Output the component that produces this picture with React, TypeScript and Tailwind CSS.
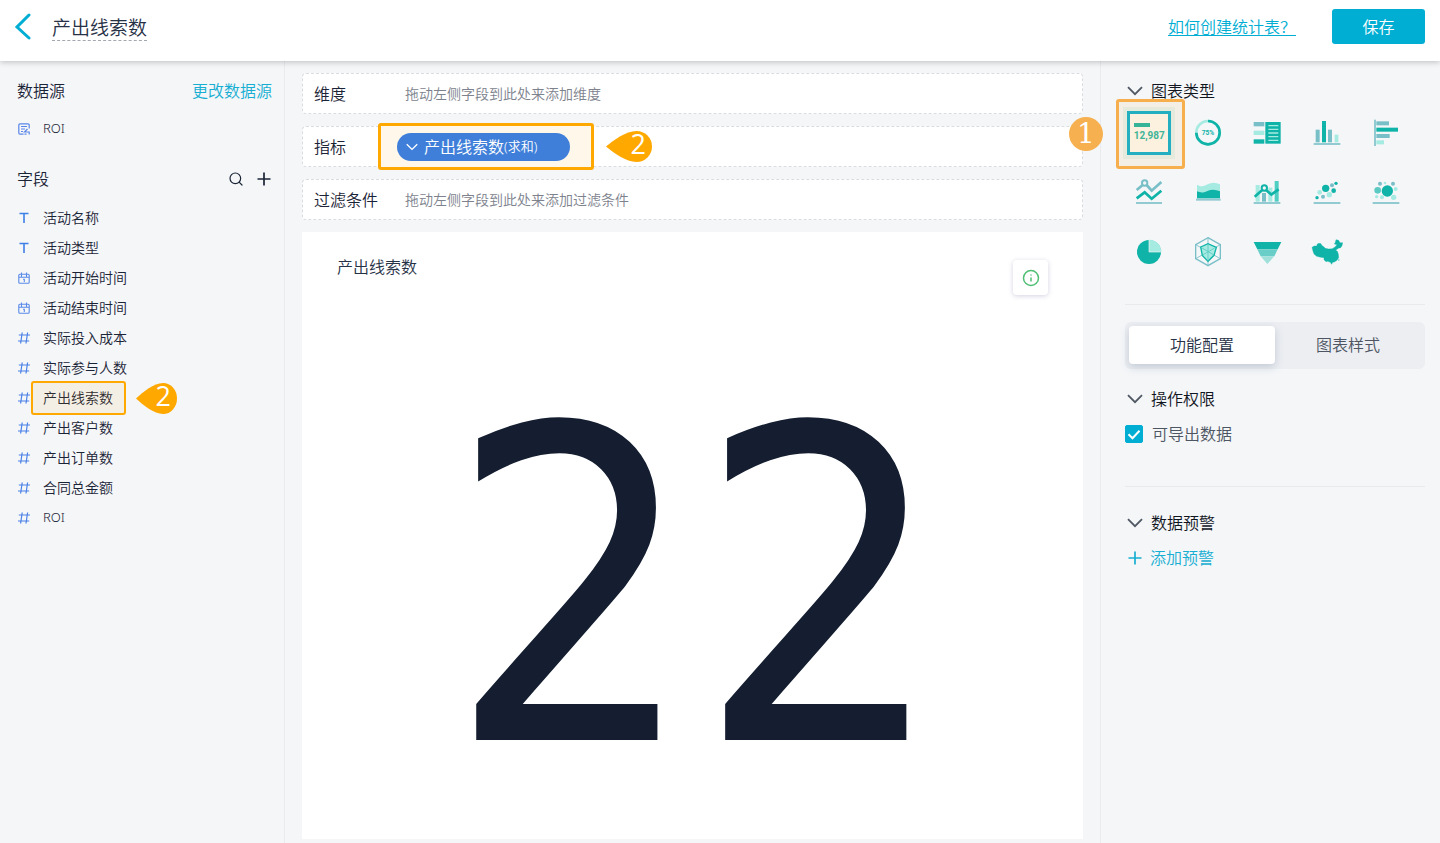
import React, { useState } from "react";
import { Info, Search } from "lucide-react";

const DARK = "#0fb3a7";
const MID = "#79bfc8";
const SOFT = "#5cc9c3";
const LIGHT = "#a5ebe2";
const BASE = "#92cad2";

type FieldKind = "text" | "date" | "number";
type Field = { name: string; kind: FieldKind; marked?: boolean };

const fields: Field[] = [
  { name: "活动名称", kind: "text" },
  { name: "活动类型", kind: "text" },
  { name: "活动开始时间", kind: "date" },
  { name: "活动结束时间", kind: "date" },
  { name: "实际投入成本", kind: "number" },
  { name: "实际参与人数", kind: "number" },
  { name: "产出线索数", kind: "number", marked: true },
  { name: "产出客户数", kind: "number" },
  { name: "产出订单数", kind: "number" },
  { name: "合同总金额", kind: "number" },
  { name: "ROI", kind: "number" },
];

function FieldIcon({ kind }: { kind: FieldKind }) {
  if (kind === "text") {
    return (
      <svg className="size-3 text-[#3f7fe8]" viewBox="0 0 12 12" fill="none" stroke="currentColor" strokeWidth="1.6">
        <path d="M1.500 1.500h9M6 1.500V11" />
      </svg>
    );
  }
  if (kind === "date") {
    return (
      <svg className="size-3 text-[#5b8be8]" viewBox="0 0 12 12" fill="none" stroke="currentColor" strokeWidth="1.1">
        <rect x="0.8" y="2.300" width="10.400" height="9" rx="1" />
        <path d="M3.500 0.500v4.500M8.500 0.500v4.500M0.800 5.200h10.400M5 7.300h1.300v2.700" />
      </svg>
    );
  }
  return (
    <svg className="size-3 text-[#4a80e6]" viewBox="0 0 12 12" fill="none" stroke="currentColor" strokeWidth="1.2">
      <path d="M4.200 0.500L2.600 11.500M9.600 0.500L8 11.500M0.800 3h11.200M0 9h11.200" />
    </svg>
  );
}

function Chevron({ className }: { className: string }) {
  return (
    <svg className={className} viewBox="0 0 16 10" fill="none" stroke="currentColor" strokeWidth="1.8">
      <path d="M1 1.200l7 7 7-7" />
    </svg>
  );
}

function PlusMark({ className }: { className: string }) {
  return (
    <svg className={className} viewBox="0 0 14 14" fill="none" stroke="currentColor" strokeWidth="1.7">
      <path d="M7 0.500v13M0.500 7h13" />
    </svg>
  );
}

function Callout({ className }: { className: string }) {
  return (
    <span className={`pointer-events-none absolute flex h-[31px] items-center justify-end text-white ${className}`}>
      <svg className="absolute inset-0 size-full" viewBox="0 0 46 31" preserveAspectRatio="none">
        <path d="M0 15.500C8 9 20 0 30.500 0a15.500 15.500 0 0 1 0 31C20 31 8 22 0 15.500z" fill="#ffa800" />
      </svg>
      <span className="relative pr-[6px] pb-[7px] font-['Open_Sans','Noto_Sans',sans-serif] text-[27px] leading-none font-normal">2</span>
    </span>
  );
}

function Glyph({ cx, cy, children }: { cx: number; cy: number; children: React.ReactNode }) {
  return (
    <svg className="size-8" viewBox={`${cx - 48} ${cy - 48} 96 96`} aria-hidden="true">
      {children}
    </svg>
  );
}

const chartTypes: { label: string; icon: React.ReactNode }[] = [
  {
    label: "环形进度",
    icon: (
      <Glyph cx={444} cy={189}>
        <circle cx="444" cy="188" r="35" fill="none" stroke={LIGHT} strokeWidth="8" />
        <path d="M444 153a35 35 0 1 1-35 35" fill="none" stroke={DARK} strokeWidth="8" />
        <text x="444" y="196" textAnchor="middle" fontSize="20" fontWeight="700" fill={DARK} fontFamily="Roboto, sans-serif">
          75%
        </text>
      </Glyph>
    ),
  },
  {
    label: "表格",
    icon: (
      <Glyph cx={83} cy={189}>
        <rect x="43" y="156" width="32" height="13" fill={MID} />
        <rect x="43" y="182" width="32" height="13" fill={LIGHT} />
        <rect x="43" y="208" width="32" height="13" fill={DARK} />
        <rect x="78" y="156" width="46" height="65" fill={DARK} />
        <path d="M87 167h30M87 178h30M87 189h30M87 200h30M87 211h30" stroke={LIGHT} strokeWidth="4" />
      </Glyph>
    ),
  },
  {
    label: "柱状图",
    icon: (
      <Glyph cx={261} cy={189}>
        <rect x="227" y="179" width="12" height="38" fill={MID} />
        <rect x="246" y="153" width="12" height="64" fill={DARK} />
        <rect x="264" y="179" width="12" height="38" fill={MID} />
        <rect x="284" y="194" width="11" height="23" fill={LIGHT} />
        <rect x="221" y="219" width="80" height="6" fill={BASE} />
      </Glyph>
    ),
  },
  {
    label: "条形图",
    icon: (
      <Glyph cx={438} cy={189}>
        <rect x="402" y="149" width="6" height="79" fill={BASE} />
        <rect x="409" y="154" width="38" height="12" fill={MID} />
        <rect x="409" y="173" width="65" height="12" fill={DARK} />
        <rect x="409" y="192" width="40" height="12" fill={MID} />
        <rect x="409" y="211" width="23" height="12" fill={LIGHT} />
      </Glyph>
    ),
  },
  {
    label: "折线图",
    icon: (
      <Glyph cx={117} cy={81}>
        <path d="M80 75l18-15M110 60l15 17 29-26" fill="none" stroke={MID} strokeWidth="8" />
        <circle cx="104" cy="54" r="8" fill="none" stroke={MID} strokeWidth="6" />
        <path d="M80 100l24-18 21 19 29-24" fill="none" stroke={DARK} strokeWidth="8" />
        <rect x="78" y="111" width="78" height="6" fill={BASE} />
      </Glyph>
    ),
  },
  {
    label: "面积图",
    icon: (
      <Glyph cx={294} cy={81}>
        <path d="M261 59c14 8 22 4 32-1 12-6 24-6 37 0v43h-69z" fill={LIGHT} />
        <path d="M261 79c14 6 22 3 33-2 12-4 24-3 36 2v21h-69z" fill={DARK} />
        <rect x="258" y="101" width="74" height="6" fill={BASE} />
      </Glyph>
    ),
  },
  {
    label: "双轴图",
    icon: (
      <Glyph cx={83} cy={81}>
        <rect x="49" y="60" width="12" height="50" fill={LIGHT} />
        <rect x="68" y="84" width="12" height="26" fill={MID} />
        <rect x="87" y="68" width="12" height="42" fill={LIGHT} />
        <rect x="106" y="48" width="12" height="62" fill="#4fcfc2" />
        <path d="M46 95l22-19M81 76l15 13 22-16" fill="none" stroke={DARK} strokeWidth="8" />
        <circle cx="75" cy="69" r="8" fill="none" stroke={DARK} strokeWidth="6" />
        <rect x="43" y="111" width="80" height="6" fill={BASE} />
      </Glyph>
    ),
  },
  {
    label: "散点图",
    icon: (
      <Glyph cx={261} cy={81}>
        <circle cx="257" cy="70" r="11" fill={DARK} />
        <circle cx="281" cy="77" r="7" fill={DARK} />
        <circle cx="288" cy="55" r="5" fill={DARK} />
        <circle cx="276" cy="61" r="6" fill={MID} />
        <circle cx="239" cy="82" r="7" fill={LIGHT} />
        <circle cx="268" cy="89" r="8" fill={LIGHT} />
        <circle cx="249" cy="95" r="6" fill={MID} />
        <circle cx="231" cy="98" r="5" fill={DARK} />
        <rect x="221" y="111" width="80" height="6" fill={BASE} />
      </Glyph>
    ),
  },
  {
    label: "气泡图",
    icon: (
      <Glyph cx={438} cy={81}>
        <circle cx="442" cy="78" r="17" fill={DARK} />
        <circle cx="413" cy="76" r="10" fill={SOFT} />
        <circle cx="461" cy="97" r="8" fill={LIGHT} />
        <circle cx="467" cy="72" r="6" fill={LIGHT} />
        <circle cx="420" cy="56" r="6" fill={MID} />
        <circle cx="459" cy="56" r="6" fill={MID} />
        <circle cx="435" cy="54" r="4" fill={LIGHT} />
        <circle cx="426" cy="97" r="6" fill={LIGHT} />
        <circle cx="410" cy="95" r="5" fill={LIGHT} />
        <rect x="398" y="111" width="80" height="6" fill={BASE} />
      </Glyph>
    ),
  },
  {
    label: "饼图",
    icon: (
      <Glyph cx={117} cy={258}>
        <circle cx="117" cy="261" r="36" fill={DARK} />
        <path d="M117 261v-37a37 37 0 0 1 37 37z" fill={LIGHT} />
        <path d="M117 224v37h37" fill="none" stroke="#f4f6f8" strokeWidth="2" />
      </Glyph>
    ),
  },
  {
    label: "雷达图",
    icon: (
      <Glyph cx={294} cy={258}>
        <path d="M294 218l37 21v42l-37 21-37-21v-42z" fill="none" stroke={MID} strokeWidth="4" />
        <path d="M294 218v84M257 239l74 42M331 239l-74 42" stroke={MID} strokeWidth="2.500" />
        <path d="M272 246l22-10 25 11-7 24-18 18-17-18z" fill={LIGHT} stroke={DARK} strokeWidth="4" />
        <path d="M294 238v50M276 249l36 21M314 249l-36 21" stroke={SOFT} strokeWidth="2.500" />
      </Glyph>
    ),
  },
  {
    label: "漏斗图",
    icon: (
      <Glyph cx={83} cy={258}>
        <path d="M43 231h83l-11 22H54z" fill={DARK} />
        <path d="M54 253h61l-10 21H64z" fill="#68cec7" />
        <path d="M64 274h41l-21 23z" fill="#9fe0da" />
      </Glyph>
    ),
  },
  {
    label: "地图",
    icon: (
      <Glyph cx={261} cy={258}>
        <path
          d="M216 247l7-4 7 0 2-6 5-2 6 1 2 5 6 4 5 5 10 2 11-1 8-5 6-7-8-2 3-5 2-8 8 2 4 7 8 0-2 9-4 6-7 2-8 6 5 3 3 8 1 11-5 8-8 5-5 1-3 6-4-6-8-3-5 1-6-6 0-6-10-1-12-3-8-7-3-8z"
          fill={DARK}
          stroke={DARK}
          strokeWidth="1"
          strokeLinejoin="round"
        />
        <path d="M296 282l3 2-2 4-3-2z" fill={SOFT} />
      </Glyph>
    ),
  },
];

function SectionTitle({ children }: { children: React.ReactNode }) {
  return (
    <button type="button" className="flex h-6 items-center gap-2 pl-[2px] text-base text-[#11151d]">
      <Chevron className="h-[10px] w-4 text-[#505864]" />
      {children}
    </button>
  );
}

function DropRow({ label, children }: { label: string; children: React.ReactNode }) {
  return (
    <div className="relative flex h-[41px] items-center rounded-sm border border-dashed border-[#d9dce1] bg-white pl-[11px]">
      <span className="w-[83px] shrink-0 text-base text-[#1b2436]">{label}</span>
      {children}
    </div>
  );
}

export default function App() {
  const [exportable, setExportable] = useState(true);
  const [tab, setTab] = useState(0);

  return (
    <div className="flex min-h-screen flex-col bg-[#f4f6f8] font-['Noto_Sans','Noto_Sans_CJK_SC',sans-serif] font-[350] text-[#1b2436]">
      <header className="relative z-10 flex h-[61px] items-center bg-white pr-[15px] pb-2 pl-[14px] shadow-[0_1px_6px_rgba(0,0,0,0.24)]">
        <button type="button" aria-label="返回" className="text-[#00aed3]">
          <svg className="h-7 w-5" viewBox="0 0 20 28" fill="none" stroke="currentColor" strokeWidth="3" strokeLinecap="round">
            <path d="M15 2L3 14L15 25" />
          </svg>
        </button>
        <h1 className="ml-[18px] border-b border-dashed border-[#a2a7b0] pt-1 text-[19px] leading-[23px] text-[#273146]">产出线索数</h1>
        <a href="#help" className="ml-auto text-base text-[#00aed3] underline underline-offset-2">
          如何创建统计表？
        </a>
        <button type="button" className="ml-9 h-[35px] w-[93px] rounded-[3px] bg-[#00aed3] text-base text-white">
          保存
        </button>
      </header>

      <div className="flex flex-1">
        <aside className="w-[285px] shrink-0 border-r border-[#e9ebef] pt-[18px] pr-3 pl-[17px]">
          <div className="flex h-6 items-center justify-between text-base">
            <h2>数据源</h2>
            <button type="button" className="text-[#16aed2]">
              更改数据源
            </button>
          </div>
          <div className="mt-[14px] flex h-6 items-center gap-[13px] pl-[1px] text-[13px]">
            <svg className="size-3 text-[#5b86e8]" viewBox="0 0 12 12" fill="none" stroke="currentColor" strokeWidth="1.2">
              <path d="M11.200 5.500V2a1.200 1.200 0 0 0-1.200-1.200H2A1.200 1.200 0 0 0 0.800 2v8A1.200 1.200 0 0 0 2 11.200h3.500M3 3.500h6M3 6h4M3 8.500h2" />
              <path d="M9.500 6L6.500 9h4.700v2.500M6.500 11.200h2" />
            </svg>
            <span>ROI</span>
          </div>
          <div className="mt-[26px] flex h-6 items-center justify-between text-base">
            <h2>字段</h2>
            <div className="flex items-center gap-[13px] pr-[1px] text-[#1b2436]">
              <button type="button" aria-label="搜索字段">
                <Search className="size-4" strokeWidth={1.800} />
              </button>
              <button type="button" aria-label="添加字段">
                <PlusMark className="size-[14px]" />
              </button>
            </div>
          </div>
          <ul className="mt-3">
            {fields.map((field, i) => (
              <li key={i} className="relative flex h-[30px] items-center gap-[13px] pl-[1px]">
                <FieldIcon kind={field.kind} />
                <span className={field.name === "ROI" ? "text-[13px]" : "text-sm"}>{field.name}</span>
                {field.marked && (
                  <>
                    <span className="pointer-events-none absolute top-[-2px] left-[14px] h-[34px] w-[95px] rounded-[3px] border-[2px] border-[#ffa800] bg-[#ffa800]/8" />
                    <Callout className="top-0 left-[119px] w-[41px]" />
                  </>
                )}
              </li>
            ))}
          </ul>
        </aside>

        <main className="flex min-w-0 flex-1 flex-col gap-3 pt-3 pr-[17px] pb-1 pl-[17px]">
          <DropRow label="维度">
            <span className="pl-2 text-sm text-[#7d828d]">拖动左侧字段到此处来添加维度</span>
          </DropRow>
          <DropRow label="指标">
            <span className="pointer-events-none absolute top-[-4px] left-[75px] h-[47px] w-[216px] rounded-[3px] border-[3px] border-[#ffa800] bg-[#fff8ea]" />
            <button type="button" className="relative flex h-7 w-[173px] items-center rounded-full bg-[#407fd9] pl-[9px] text-white">
              <Chevron className="mr-[6px] h-2 w-3" />
              <span className="text-base">产出线索数</span>
              <span className="text-[13px]">(求和)</span>
            </button>
            <Callout className="top-1 left-[303px] w-[46px]" />
          </DropRow>
          <DropRow label="过滤条件">
            <span className="pl-2 text-sm text-[#7d828d]">拖动左侧字段到此处来添加过滤条件</span>
          </DropRow>

          <section className="flex flex-1 flex-col bg-white pt-[23px] pr-[35px] pl-[35px]">
            <div className="flex items-start justify-between">
              <h2 className="text-base text-[#273146]">产出线索数</h2>
              <button
                type="button"
                aria-label="说明"
                className="mt-[5px] flex size-[35px] items-center justify-center rounded-sm bg-white text-[#4fbf73] shadow-[0_1px_5px_rgba(60,50,120,0.22)]"
              >
                <Info className="size-[18px]" strokeWidth={2} />
              </button>
            </div>
            <div className="flex flex-1 items-center justify-center pt-11 pl-2">
              <span className="font-['DejaVu_Sans_Condensed','Open_Sans',sans-serif] text-[435px] leading-none font-normal text-[#141e30]">22</span>
            </div>
          </section>
        </main>

        <aside className="w-[340px] shrink-0 border-l border-[#e9ebef] pt-[18px] pr-[15px] pl-6">
          <SectionTitle>图表类型</SectionTitle>
          <div className="mr-[9px] -ml-[6px] grid grid-cols-5">
            <div className="relative flex h-[59px] items-center justify-center">
              <button
                type="button"
                aria-label="指标卡"
                className="flex size-11 shrink-0 flex-col items-start justify-center border-[3px] border-[#0cafcc] bg-[#fdf8f0] pl-1 outline-[4px] outline-[#e4f1ec]"
              >
                <span className="mb-[2px] h-1 w-4 bg-[#22b5a0]" />
                <span className="font-[Roboto,sans-serif] text-[10px] leading-[14px] font-bold text-[#2bb5a0]">12,987</span>
              </button>
              <span className="pointer-events-none absolute top-[-4px] left-[-3px] h-[70px] w-[69px] rounded-[3px] border-[3px] border-[#f7ae4d] bg-[#f7ae4d]/10" />
              <span className="pointer-events-none absolute top-[14px] left-[-50px] flex size-[34px] items-center justify-center rounded-full bg-[#f6b04f] font-['DejaVu_Serif',serif] text-[28px] leading-none font-normal text-white">
                1
              </span>
            </div>
            {chartTypes.map((type) => (
              <button key={type.label} type="button" aria-label={type.label} className="flex h-[59px] items-center justify-center">
                {type.icon}
              </button>
            ))}
          </div>

          <div role="tablist" className="mt-6 border-t border-[#e8eaee] pt-[17px]">
            <div className="flex h-[47px] rounded-md bg-[#eceef2] p-1">
              {["功能配置", "图表样式"].map((name, i) => (
                <button
                  key={name}
                  type="button"
                  role="tab"
                  aria-selected={tab === i}
                  onClick={() => setTab(i)}
                  className={
                    tab === i
                      ? "h-[38px] flex-1 rounded-[4px] bg-white text-base text-[#273146] shadow-[0_3px_8px_rgba(100,120,145,0.3)]"
                      : "h-[38px] flex-1 rounded-[4px] text-base text-[#4d5563]"
                  }
                >
                  {name}
                </button>
              ))}
            </div>
          </div>

          <div className="mt-[18px]">
            <SectionTitle>操作权限</SectionTitle>
            <label className="mt-[11px] flex h-6 items-center gap-[9px] text-base text-[#4d5563]">
              <span className="relative flex size-[18px]">
                <input
                  type="checkbox"
                  checked={exportable}
                  onChange={(e) => setExportable(e.target.checked)}
                  className="peer size-[18px] appearance-none rounded-[2px] border border-[#00aed3] checked:bg-[#00aed3]"
                />
                <svg className="pointer-events-none absolute inset-0 hidden size-full peer-checked:block" viewBox="0 0 18 18" fill="none" stroke="#fff" strokeWidth="2">
                  <path d="M3.500 9.200l4 4 7-7.500" />
                </svg>
              </span>
              可导出数据
            </label>
          </div>

          <div className="mt-10 border-t border-[#e8eaee] pt-6">
            <SectionTitle>数据预警</SectionTitle>
            <button type="button" className="mt-[11px] flex h-6 items-center gap-2 pl-[3px] text-base text-[#16aed2]">
              <PlusMark className="size-[14px]" />
              添加预警
            </button>
          </div>
        </aside>
      </div>
    </div>
  );
}
